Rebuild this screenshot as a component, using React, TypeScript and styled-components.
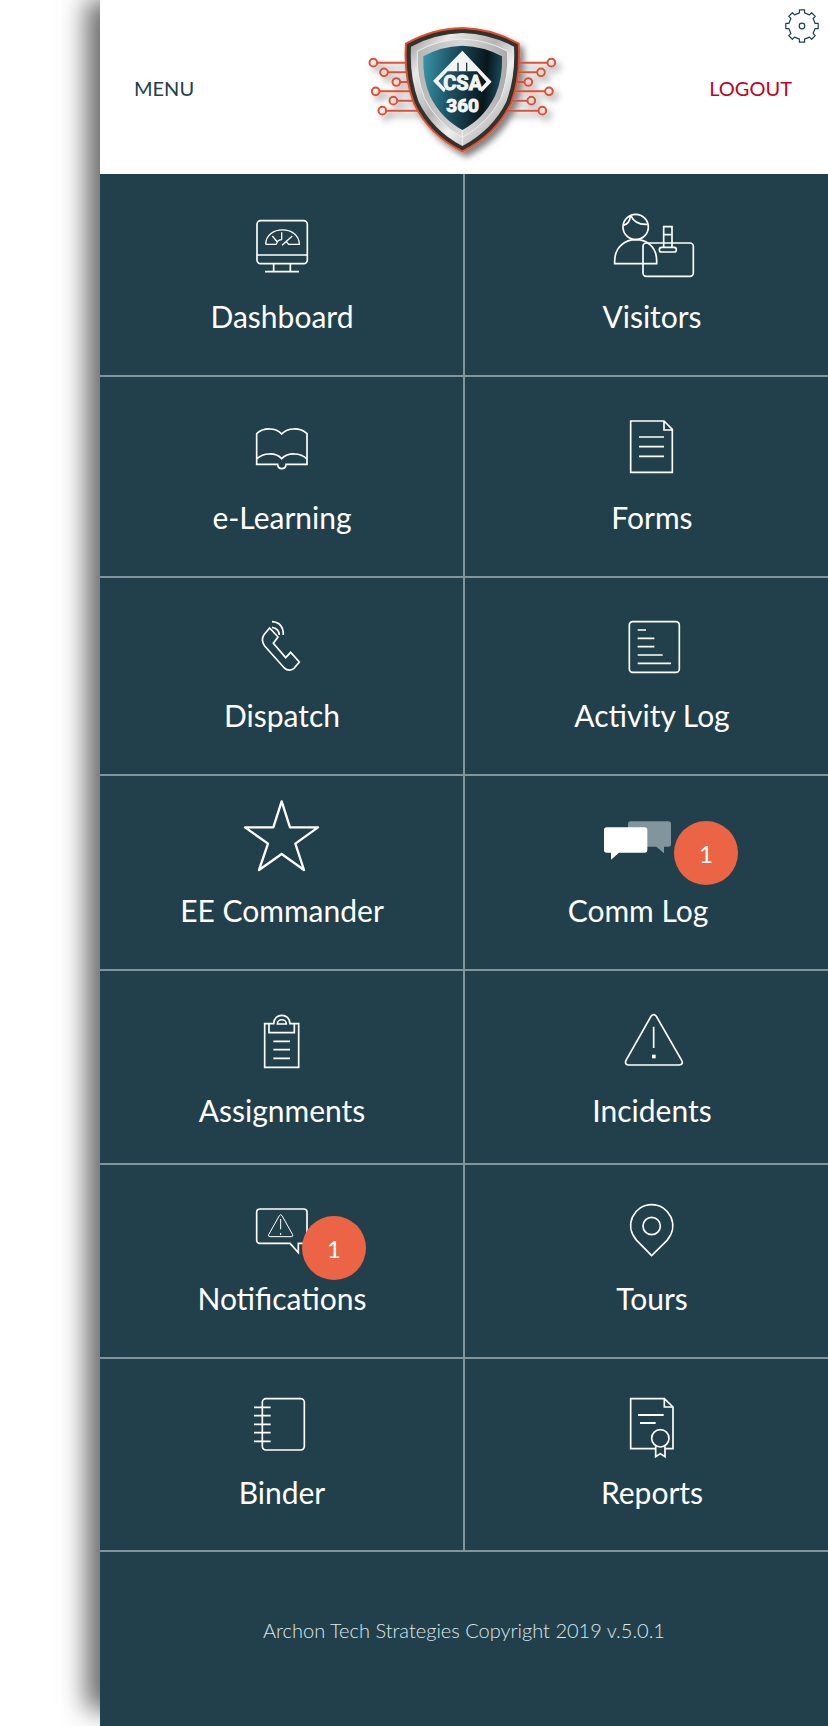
import React from "react";
import styled, { createGlobalStyle } from "styled-components";

const ink = "#21404b";
const rule = "#82959c";

const GlobalStyle = createGlobalStyle`
  *, *::before, *::after { box-sizing: border-box; }
  body {
    margin: 0;
    background: #fff;
    font-family: Lato, "Liberation Sans", sans-serif;
  }
`;

const Page = styled.div`
  min-height: 100vh;
  padding-left: 100px;
  display: flex;
  overflow: hidden;
`;

const Drawer = styled.div`
  flex: 1;
  min-width: 0;
  display: flex;
  flex-direction: column;
  background: ${ink};
  box-shadow: -22px -8px 24px -8px rgba(0, 0, 0, 0.58);
`;

const Header = styled.header`
  position: relative;
  display: grid;
  grid-template-columns: 1fr auto 1fr;
  align-items: center;
  height: 174px;
  padding: 2px 36px 0 34px;
  background: #fff;
`;

const HeaderButton = styled.button<{ $tone: string; $end?: boolean }>`
  justify-self: ${(p) => (p.$end ? "end" : "start")};
  padding: 0;
  border: 0;
  background: none;
  color: ${(p) => p.$tone};
  font: 400 20px/24px Lato, "Liberation Sans", sans-serif;
  cursor: pointer;
`;

const SettingsButton = styled.button`
  position: absolute;
  top: 8px;
  right: 8px;
  width: 36px;
  height: 36px;
  padding: 0;
  border: 0;
  background: none;
  cursor: pointer;

  svg {
    display: block;
  }
`;

const LogoArt = styled.svg`
  display: block;
  width: 230px;
  height: 160px;
`;

const Tiles = styled.nav`
  display: grid;
  grid-template-columns: calc(50% + 1px) 1fr;
  grid-template-rows: 203px 201px 198px 195px 194px 194px 193px;
`;

const Tile = styled.a<{ $nudge?: boolean; $base?: number }>`
  display: flex;
  flex-direction: column;
  align-items: center;
  justify-content: flex-end;
  gap: 12px;
  padding-bottom: ${(p) => p.$base ?? 41}px;
  border-bottom: 2px solid ${rule};
  color: #fff;
  text-decoration: none;

  &:nth-child(odd) {
    padding-left: 1px;
    border-right: 2px solid ${rule};
  }

  &:nth-child(even) {
    padding-left: 11px;
    padding-right: ${(p) => (p.$nudge ? 28 : 0)}px;
  }
`;

const IconBox = styled.span`
  position: relative;
  width: 96px;
  height: 80px;
`;

const IconSvg = styled.svg`
  display: block;
  width: 96px;
  height: 80px;
  fill: none;
  stroke: #fff;
  stroke-width: 5;
`;

const Label = styled.span`
  font-size: 30px;
  line-height: 36px;
  white-space: nowrap;
`;

const Badge = styled.span<{ $x: number; $y: number }>`
  position: absolute;
  left: ${(p) => p.$x}px;
  top: ${(p) => p.$y}px;
  width: 64px;
  height: 64px;
  padding-top: 3px;
  border-radius: 50%;
  background: #ec6446;
  font-size: 24px;
  line-height: 60px;
  text-align: center;
`;

const Footer = styled.footer`
  padding: 66px 24px 80px;
  color: #dfe8ee;
  font-size: 20px;
  font-weight: 300;
  line-height: 24px;
  text-align: center;
`;

const gearPath = (() => {
  const pts: string[] = [];
  const at = (r: number, deg: number) => {
    const a = (deg * Math.PI) / 180;
    return `${(18 + r * Math.cos(a)).toFixed(2)} ${(18 + r * Math.sin(a)).toFixed(2)}`;
  };
  for (let i = 0; i < 8; i++) {
    const c = i * 45;
    pts.push(at(13.4, c - 11), at(16.4, c - 9), at(16.4, c + 9), at(13.4, c + 11));
  }
  return `M${pts.join("L")}Z`;
})();

const Gear = () => (
  <svg width="36" height="36" viewBox="0 0 36 36" fill="none" stroke={ink} strokeWidth="1.2" aria-hidden="true">
    <path d={gearPath} strokeLinejoin="round" />
    <circle cx="18" cy="18" r="2.8" />
  </svg>
);

const traces = [
  { y: 158, l: 73, r: 607 },
  { y: 187, l: 105, r: 576 },
  { y: 216, l: 142, r: 538 },
  { y: 244, l: 80, r: 600 },
  { y: 272, l: 133, r: 547 },
  { y: 302, l: 100, r: 580 },
];

const Logo = () => (
  <LogoArt viewBox="-3 -6 690 480" role="img" aria-label="CSA 360">
    <defs>
      <linearGradient id="steel" x1="0" y1="0" x2="1" y2="1">
        <stop offset="0" stopColor="#8f8f8f" />
        <stop offset=".2" stopColor="#e8e8e8" />
        <stop offset=".45" stopColor="#b4b4b4" />
        <stop offset=".62" stopColor="#f0f0f0" />
        <stop offset="1" stopColor="#8c8c8c" />
      </linearGradient>
      <linearGradient id="bevel" x1="0" y1="0" x2="1" y2="0">
        <stop offset="0" stopColor="#b5b5b5" />
        <stop offset=".5" stopColor="#d8d8d8" />
        <stop offset="1" stopColor="#a9a9a9" />
      </linearGradient>
      <linearGradient id="field" x1="0" y1="0.2" x2="1" y2="0.3">
        <stop offset="0" stopColor="#3993a8" />
        <stop offset=".35" stopColor="#1d5566" />
        <stop offset=".8" stopColor="#08161d" />
        <stop offset="1" stopColor="#1b4a59" />
      </linearGradient>
      <filter id="drop" x="-20%" y="-20%" width="150%" height="150%">
        <feDropShadow dx="12" dy="14" stdDeviation="10" floodColor="#000" floodOpacity=".5" />
      </filter>
    </defs>
    <g filter="url(#drop)">
      <g fill="none" stroke="#de4f35" strokeWidth="6">
        {traces.map((t) => (
          <g key={t.y}>
            <path d={`M${t.l + 12} ${t.y}H${t.r - 12}`} />
            <circle cx={t.l} cy={t.y} r="11.5" />
            <circle cx={t.r} cy={t.y} r="11.5" />
          </g>
        ))}
      </g>
      <path
        d="M340 54Q430 56 509 101Q516 200 486 280Q440 375 340 424Q240 375 195 280Q164 200 171 101Q250 56 340 54Z"
        fill="#33302f"
        stroke="#e2502f"
        strokeWidth="6"
      />
    </g>
    <path
      d="M340 69Q425 72 495 110Q500 200 472 275Q430 360 340 408Q250 360 209 275Q181 200 186 110Q255 72 340 69Z"
      fill="url(#steel)"
    />
    <path
      d="M340 87Q415 90 476 124Q480 200 455 266Q418 338 340 382Q263 338 227 266Q201 200 205 124Q265 90 340 87Z"
      fill="url(#bevel)"
      stroke="#ededed"
      strokeWidth="3"
    />
    <path
      d="M340 107Q405 109 459 139Q462 205 438 258Q405 325 340 360Q276 325 243 258Q220 205 223 139Q275 109 340 107Z"
      fill="url(#field)"
    />
    <path d="M340 360V406" stroke="#eee" strokeWidth="3" />
    <path
      d="M340 122L428 215L398 247L392 238L412 215L384 184H296L268 213L290 238L285 247L252 213Z"
      fill="#f4f4f4"
    />
    <path d="M327 158V184M353 158V184" stroke="#1a3b47" strokeWidth="4" />
    <g fill="#f4f4f4" stroke="#f4f4f4" strokeWidth="3" fontFamily="Roboto, sans-serif" fontWeight="700" textAnchor="middle">
      <text x="341" y="239" fontSize="60">CSA</text>
      <text x="341" y="306" fontSize="57">360</text>
    </g>
  </LogoArt>
);

type TileData = {
  label: string;
  view: string;
  art: React.ReactNode;
  badge?: { count: number; x: number; y: number };
  nudge?: boolean;
  base?: number;
};

const tiles: TileData[] = [
  {
    label: "Dashboard",
    view: "102 18",
    art: (
      <>
        <rect x="171" y="62" width="151" height="129" rx="11" />
        <path d="M171 165H322M221 191V215M271 191V215M195 215H297" />
        <path
          d="M197 133C198 75 297 75 298 133H266L258 124M229 133H197M229 133Q232 119 246 119M217 108L232 126M245 97V119M277 108L246 136"
          strokeWidth="4"
        />
      </>
    ),
  },
  {
    label: "Visitors",
    view: "42 18",
    art: (
      <>
        <circle cx="137" cy="81" r="38" />
        <path d="M122 46Q136 76 173 73M121 49Q119 70 101 76M74 191V182C76 98 200 98 200 182V191Z" />
        <rect x="159" y="129" width="151" height="100" rx="10" />
        <path d="M221 142V80H246V142M221 104H246" />
        <rect x="208" y="142" width="51" height="14" rx="7" />
      </>
    ),
  },
  {
    label: "e-Learning",
    view: "102 21",
    art: (
      <path d="M245 102C228 82 190 82 170 101V193H233C234 210 257 210 258 193H321V101C301 82 263 82 245 102ZM170 177C190 157 228 157 245 176C263 157 301 157 321 177" />
    ),
  },
  {
    label: "Forms",
    view: "132 21",
    art: (
      <path d="M212 63H312L337 88V217H212ZM312 63V90H337M237 111H312M237 140H312M237 169H312" />
    ),
  },
  {
    label: "Dispatch",
    view: "102 615",
    art: (
      <path d="M209 684L234 711L220 730L257 773L272 757L298 786L282 805Q267 816 253 804L194 738Q181 719 193 703ZM216 665Q250 667 250 705M216 682Q237 685 238 705" />
    ),
  },
  {
    label: "Activity Log",
    view: "132 615",
    art: (
      <>
        <rect x="208" y="665" width="150" height="152" rx="10" />
        <path d="M233 690H258M233 715H283M233 740H283M233 765H308M233 790H333" />
      </>
    ),
  },
  {
    label: "EE Commander",
    view: "222 60",
    art: (
      <path
        d="M365 64L390 142H474L406 191L432 270L365 222L297 270L324 191L255 142H340Z"
        strokeWidth="7"
        strokeLinejoin="round"
      />
    ),
  },
  {
    label: "Comm Log",
    view: "120 60",
    nudge: true,
    badge: { count: 1, x: 84, y: 21 },
    art: (
      <g stroke="none">
        <path d="M242 124H355Q363 124 363 132V192Q363 200 355 200H342V220L319 200H234V132Q234 124 242 124Z" fill="#82959c" />
        <path d="M170 142H284Q292 142 292 150V210Q292 218 284 218H207L183 239V218H170Q162 218 162 210V150Q162 142 170 142Z" fill="#fff" />
      </g>
    ),
  },
  {
    label: "Assignments",
    view: "162 0",
    base: 35,
    art: (
      <path d="M280 71H254V202H356V71H330M267 71V98H343V71M267 71H281C282 38 329 38 330 71H343M292 72C292 55 319 55 319 72ZM280 124H330M280 149H330M280 175H330" />
    ),
  },
  {
    label: "Incidents",
    view: "102 0",
    base: 35,
    art: (
      <>
        <path d="M243 49Q251 39 259 49L335 181Q341 194 328 195H175Q163 194 168 181ZM251 80V144" />
        <path d="M246 164H257V175H246Z" fill="#fff" stroke="none" />
      </>
    ),
  },
  {
    label: "Notifications",
    view: "162 564",
    badge: { count: 1, x: 68, y: 28 },
    art: (
      <>
        <path d="M240 627H371Q381 627 381 637V720Q381 730 371 730H355V758L330 730H240Q230 730 230 720V637Q230 627 240 627Z" />
        <path d="M298 647Q302 641 306 647L338 704Q340 710 334 710H270Q264 710 266 704ZM302 657V688M302 699V705" strokeWidth="3" />
      </>
    ),
  },
  {
    label: "Tours",
    view: "102 564",
    art: (
      <>
        <path d="M245 767L200 721C160 676 192 614 245 614S330 676 291 721Z" />
        <circle cx="245" cy="678" r="26" />
      </>
    ),
  },
  {
    label: "Binder",
    view: "102 36",
    base: 40,
    art: (
      <>
        <rect x="187" y="86" width="126" height="154" rx="11" />
        <path d="M162 112H212M162 137H212M162 163H212M162 188H212M162 214H212" />
      </>
    ),
  },
  {
    label: "Reports",
    view: "1212 36",
    base: 40,
    art: (
      <>
        <path d="M1367 236H1292V86H1393L1419 111V236H1396M1393 86V111H1419" />
        <path d="M1314 135H1391M1320 159H1367" strokeWidth="6" />
        <circle cx="1381" cy="205" r="26" />
        <path d="M1367 229V260L1381 251L1395 260V229" />
      </>
    ),
  },
];

export default function App() {
  return (
    <>
      <GlobalStyle />
      <Page>
        <Drawer>
          <Header>
            <HeaderButton type="button" $tone={ink}>MENU</HeaderButton>
            <Logo />
            <HeaderButton type="button" $tone="#c40021" $end>LOGOUT</HeaderButton>
            <SettingsButton type="button" aria-label="Settings">
              <Gear />
            </SettingsButton>
          </Header>
          <Tiles>
            {tiles.map((t) => (
              <Tile key={t.label} href="#" $nudge={t.nudge} $base={t.base}>
                <IconBox>
                  <IconSvg viewBox={`${t.view} 288 240`} aria-hidden="true">{t.art}</IconSvg>
                  {t.badge && (
                    <Badge $x={t.badge.x} $y={t.badge.y}>{t.badge.count}</Badge>
                  )}
                </IconBox>
                <Label>{t.label}</Label>
              </Tile>
            ))}
          </Tiles>
          <Footer>Archon Tech Strategies Copyright 2019 v.5.0.1</Footer>
        </Drawer>
      </Page>
    </>
  );
}
